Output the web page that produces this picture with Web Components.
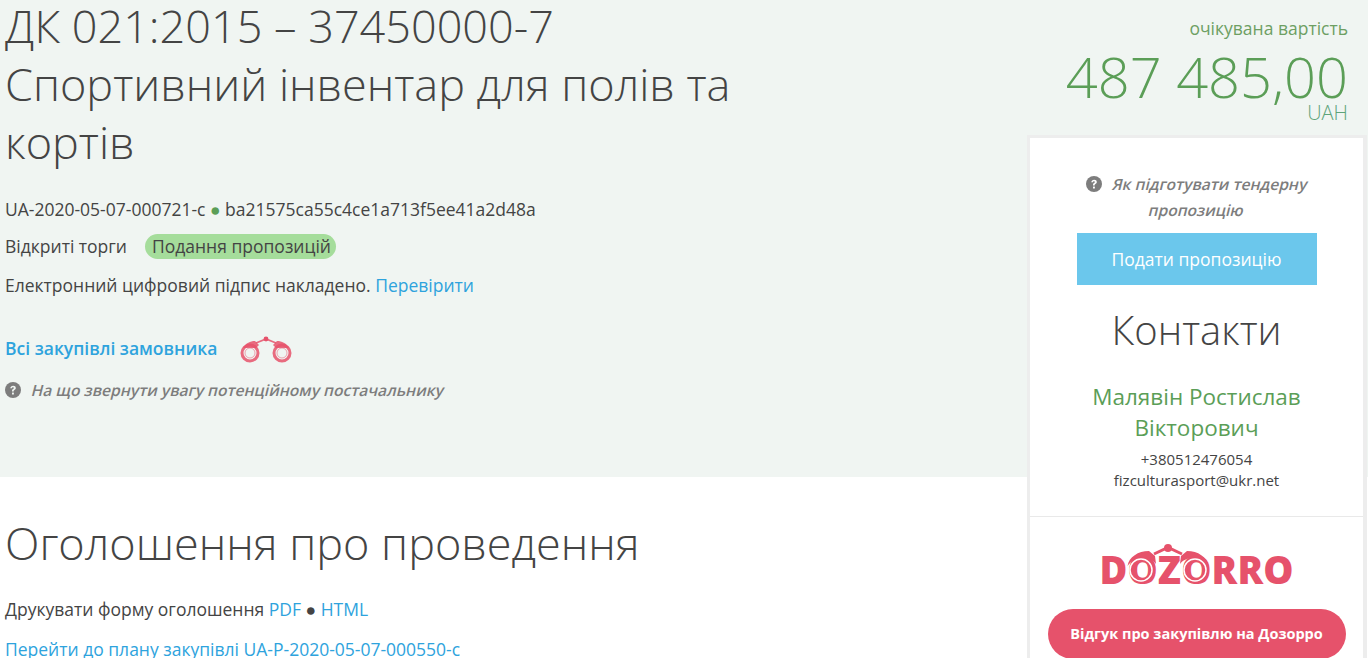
<!DOCTYPE html>
<html lang="uk">
<head>
<meta charset="utf-8">
<title>Тендер</title>
<style>
  html, body { margin: 0; height: 658px; overflow: hidden; background: #fff; }
  body { font: 17.5px/24px "Open Sans", sans-serif; color: #444; }
</style>
</head>
<body>
<tender-page>
  <tender-info slot="main"></tender-info>
  <tender-notice slot="main"></tender-notice>
  <price-box slot="side" amount="487 485,00" currency="UAH" label="очікувана вартість"></price-box>
  <side-card slot="side"></side-card>
</tender-page>

<script>
const LINK = '#2ea3dd';
const PINK = '#e6526b';

const helpIcon = (bg) => `<svg width="16" height="16" viewBox="0 0 16 16" aria-hidden="true">
  <circle cx="8" cy="8" r="8" fill="#7d7d7d"/>
  <path d="M5.300 6.200c.1-1.600 1.300-2.500 2.800-2.500 1.600 0 2.700.9 2.700 2.200 0 1-.6 1.500-1.300 2-.6.4-.8.6-.8 1.200v.3H7v-.5c0-1 .4-1.500 1.100-1.900.5-.4.8-.6.8-1 0-.5-.4-.7-.9-.7-.6 0-1 .3-1 1z" fill="${bg}"/>
  <rect x="7" y="10.600" width="1.900" height="1.900" rx=".3" fill="${bg}"/>
</svg>`;

// small binoculars next to the "all purchases" link
const BINOCULARS = `<svg width="52" height="27" viewBox="0 0 52 27" aria-hidden="true">
  <g fill="none" stroke="${PINK}" stroke-opacity=".85">
    <circle cx="10" cy="17" r="8" stroke-width="3"/>
    <circle cx="42" cy="17" r="8" stroke-width="3"/>
    <circle cx="10" cy="17" r="5" stroke-width="1" stroke-opacity=".5"/>
    <circle cx="42" cy="17" r="5" stroke-width="1" stroke-opacity=".5"/>
    <path d="M16 7 L26 3 L36 7" stroke-width="1.800"/>
  </g>
  <circle cx="26" cy="3" r="2.400" fill="${PINK}"/>
  <path d="M3 12 C6 7 10 5 15 5 L19 9 L16 12 Z" fill="${PINK}" fill-opacity=".85"/>
  <path d="M49 12 C46 7 42 5 37 5 L33 9 L36 12 Z" fill="${PINK}" fill-opacity=".85"/>
</svg>`;

// drawn over the two O letters of the logo: shoulders, bridge and the white stripe in each ring
const LOGO_BINOCULARS = `<svg width="84" height="44" viewBox="0 0 84 44" aria-hidden="true">
  <path d="M28 11 L42 4.500 L56 11" fill="none" stroke="${PINK}" stroke-width="3"/>
  <circle cx="42" cy="5" r="4" fill="${PINK}"/>
  <path d="M1.500 23 C3 14 12 8 23 8 L29 13 L30 21 C25 13 8 13 1.500 23 Z" fill="${PINK}"/>
  <path d="M82.500 23 C81 14 72 8 61 8 L55 13 L54 21 C59 13 76 13 82.500 23 Z" fill="${PINK}"/>
  <circle cx="15" cy="27" r="11" fill="none" stroke="#fff" stroke-width="1.500"/>
  <circle cx="69" cy="27" r="11" fill="none" stroke="#fff" stroke-width="1.500"/>
</svg>`;

class TenderPage extends HTMLElement {
  constructor() {
    super();
    this.attachShadow({ mode: 'open' });
    this.shadowRoot.innerHTML = `
      <style>
        :host {
          display: grid;
          grid-template-columns: 1027px 341px;
          height: 658px;
          overflow: hidden;
          background: linear-gradient(#f0f5f2 477px, #fff 477px);
        }
        .main { padding-left: 5px; min-width: 0; }
        .side { min-width: 0; }
      </style>
      <div class="main"><slot name="main"></slot></div>
      <div class="side"><slot name="side"></slot></div>
    `;
  }
}

class TenderInfo extends HTMLElement {
  constructor() {
    super();
    this.attachShadow({ mode: 'open' });
    this.shadowRoot.innerHTML = `
      <style>
        :host { display: block; height: 477px; }
        h1 {
          margin: -3px 0 0;
          width: 760px;
          font: 300 45px/58px "Open Sans", sans-serif;
          color: #444;
        }
        .rows { display: flex; flex-direction: column; margin-top: 26px; }
        .row { display: flex; align-items: center; height: 24px; white-space: pre; }
        .row + .row { margin-top: 13px; }
        .row.last { margin-top: 15px; }
        .dot { color: #5b9e57; }
        a { color: ${LINK}; text-decoration: none; }
        .status {
          margin-left: 18px;
          padding: 0 5px 0 7px;
          background: #a5dd9b;
          border-radius: 13px;
          line-height: 25px;
          height: 25px;
        }
        .all { margin-top: 37px; display: flex; align-items: center; height: 28px; }
        .all a { font-weight: 600; }
        .all svg { margin: 2px 0 0 23px; }
        .help {
          margin-top: 17px;
          display: flex;
          align-items: center;
          gap: 11px;
          font-size: 15.600px;
          font-weight: 600;
          color: #7d7d7d;
          height: 22px;
        }
        /* the original has only the upright face, so its italic is a slanted upright */
        .help span { display: inline-block; transform: skewX(-14deg); }
      </style>
      <h1>ДК 021:2015 – 37450000-7<br>Спортивний інвентар для полів та кортів</h1>
      <div class="rows">
        <div class="row">UA-2020-05-07-000721-c <span class="dot">●</span> ba21575ca55c4ce1a713f5ee41a2d48a</div>
        <div class="row">Відкриті торги<span class="status">Подання пропозицій</span></div>
        <div class="row last">Електронний цифровий підпис накладено. <a href="#">Перевірити</a></div>
      </div>
      <div class="all"><a href="#">Всі закупівлі замовника</a>${BINOCULARS}</div>
      <div class="help">${helpIcon('#f0f5f2')}<span>На що звернути увагу потенційному постачальнику</span></div>
    `;
  }
}

class TenderNotice extends HTMLElement {
  constructor() {
    super();
    this.attachShadow({ mode: 'open' });
    this.shadowRoot.innerHTML = `
      <style>
        :host { display: block; }
        h2 {
          margin: 39px 0 0;
          font: 300 45px/60px "Open Sans", sans-serif;
          color: #444;
        }
        p { margin: 0; line-height: 24px; }
        .print { margin-top: 24px; }
        .plan { margin-top: 16px; white-space: nowrap; }
        a { color: ${LINK}; text-decoration: none; }
      </style>
      <h2>Оголошення про проведення</h2>
      <p class="print">Друкувати форму оголошення <a href="#">PDF</a> ● <a href="#">HTML</a></p>
      <p class="plan"><a href="#">Перейти до плану закупівлі UA-P-2020-05-07-000550-c</a></p>
    `;
  }
}

class PriceBox extends HTMLElement {
  constructor() {
    super();
    this.attachShadow({ mode: 'open' });
    this.shadowRoot.innerHTML = `
      <style>
        :host { display: block; height: 135px; padding-right: 20px; box-sizing: border-box; text-align: right; }
        .label { padding-top: 16px; line-height: 24px; color: #6d9f63; }
        .sum { font: 300 56px/60px "Open Sans", sans-serif; color: #5b9e57; margin-top: 6px; white-space: nowrap; }
        .cur { font-size: 20px; font-weight: 300; line-height: 20px; color: #5ea47a; margin-top: -3px; }
      </style>
      <div class="label">${this.getAttribute('label')}</div>
      <div class="sum">${this.getAttribute('amount')}</div>
      <div class="cur">${this.getAttribute('currency')}</div>
    `;
  }
}

class SideCard extends HTMLElement {
  constructor() {
    super();
    this.attachShadow({ mode: 'open' });
    this.shadowRoot.innerHTML = `
      <style>
        :host {
          display: block;
          width: 340px;
          box-sizing: border-box;
          border: solid #ededed;
          border-width: 3px 4px 0 3px;
          background: #fff;
          text-align: center;
        }
        .top { padding: 33px 20px 0; }
        .help { font-size: 15.600px; font-weight: 600; color: #7d7d7d; line-height: 26px; }
        .help span { display: inline-block; transform: skewX(-14deg); }
        .help svg { vertical-align: -2px; margin-right: 11px; }
        .btn {
          display: block;
          width: 240px;
          height: 52px;
          line-height: 52px;
          margin: 10px auto 0;
          background: #6bc7ec;
          color: #fff;
        }
        h3 { margin: 15px 0 0; font: 300 40px/60px "Open Sans", sans-serif; color: #444; }
        .name { margin: 21px auto 0; font-size: 22.500px; line-height: 31px; color: #5b9e57; width: 260px; }
        .contact { font-size: 15px; line-height: 21px; margin-top: 6px; color: #444; }
        .dozorro { margin-top: 25px; border-top: 1px solid #e9e9e9; padding-top: 26px; }
        .logo {
          position: relative;
          width: 194px;
          height: 42px;
          margin: 0 auto;
          font: 800 38px/42px "Open Sans", sans-serif;
          color: ${PINK};
          letter-spacing: .1px;
          white-space: nowrap;
        }
        .logo svg { position: absolute; left: 26px; top: 0; }
        .logo span { position: relative; top: 5px; }
        .review {
          display: block;
          width: 298px;
          height: 50px;
          line-height: 50px;
          margin: 24px auto 0;
          border-radius: 25px;
          background: ${PINK};
          color: #fff;
          font-size: 14.500px;
          font-weight: 700;
        }
      </style>
      <div class="top">
        <div class="help">${helpIcon('#fff')}<span>Як підготувати тендерну</span><br><span>пропозицію</span></div>
        <div class="btn">Подати пропозицію</div>
        <h3>Контакти</h3>
        <div class="name">Малявін Ростислав Вікторович</div>
        <div class="contact">+380512476054<br>fizculturasport@ukr.net</div>
      </div>
      <div class="dozorro">
        <div class="logo"><span>DOZORRO</span>${LOGO_BINOCULARS}</div>
        <div class="review">Відгук про закупівлю на Дозорро</div>
      </div>
    `;
  }
}

customElements.define('tender-page', TenderPage);
customElements.define('tender-info', TenderInfo);
customElements.define('tender-notice', TenderNotice);
customElements.define('price-box', PriceBox);
customElements.define('side-card', SideCard);
</script>
</body>
</html>
